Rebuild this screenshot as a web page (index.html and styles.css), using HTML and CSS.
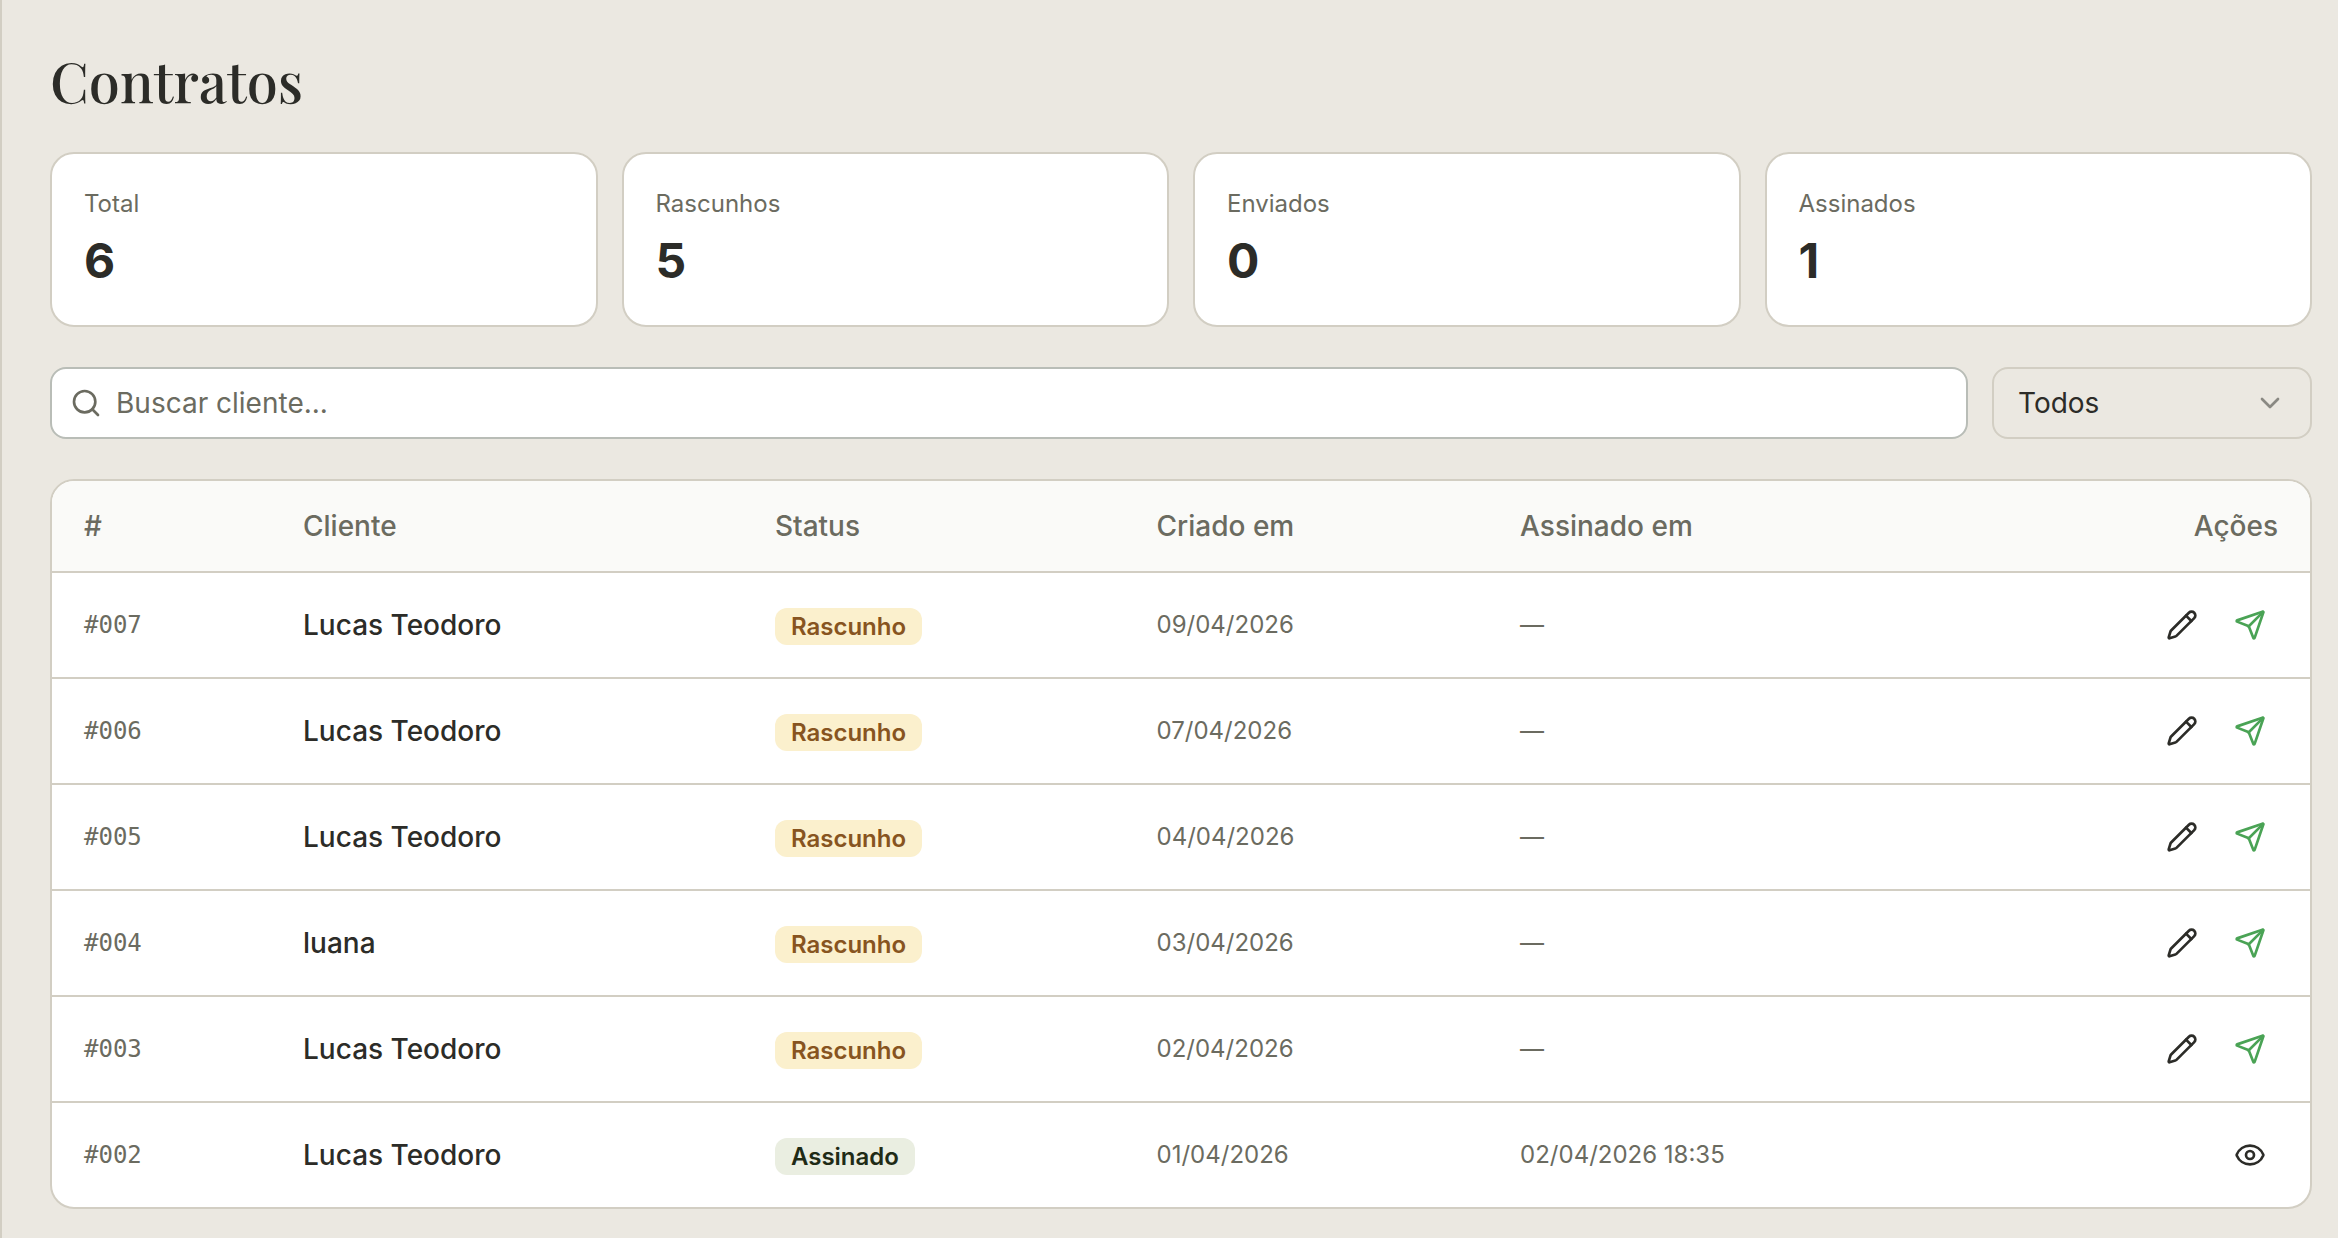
FILE: index.html
```html
<!doctype html>
<html lang="pt-BR">
<head>
  <meta charset="utf-8">
  <title>Contratos</title>
  <meta name="viewport" content="width=device-width, initial-scale=1">
  <link rel="stylesheet" href="styles.css">
</head>
<body>
  <!-- shared icons -->
  <svg class="sprite" aria-hidden="true">
    <symbol id="i-search" viewBox="0 0 24 24"><circle cx="11" cy="11" r="8"/><path d="m21 21-4.3-4.3"/></symbol>
    <symbol id="i-chevron" viewBox="0 0 24 24"><path d="m6 9 6 6 6-6"/></symbol>
    <symbol id="i-pencil" viewBox="0 0 24 24"><path d="M21.174 6.812a1 1 0 0 0-3.986-3.987L3.842 16.174a2 2 0 0 0-.5.83l-1.321 4.352a.5.5 0 0 0 .623.622l4.353-1.32a2 2 0 0 0 .83-.497z"/><path d="m15 5 4 4"/></symbol>
    <symbol id="i-send" viewBox="0 0 24 24"><path d="M14.536 21.686a.5.5 0 0 0 .937-.024l6.5-19a.496.496 0 0 0-.635-.635l-19 6.5a.5.5 0 0 0-.024.937l7.93 3.18a2 2 0 0 1 1.112 1.11z"/><path d="m21.854 2.147-10.94 10.939"/></symbol>
    <symbol id="i-eye" viewBox="0 0 24 24"><path d="M2.062 12.348a1 1 0 0 1 0-.696 10.75 10.75 0 0 1 19.876 0 1 1 0 0 1 0 .696 10.75 10.75 0 0 1-19.876 0"/><circle cx="12" cy="12" r="3"/></symbol>
  </svg>

  <main class="page">
    <h1>Contratos</h1>

    <section class="stats" aria-label="Resumo">
      <div class="card"><p class="card-label">Total</p><p class="card-value">6</p></div>
      <div class="card"><p class="card-label">Rascunhos</p><p class="card-value">5</p></div>
      <div class="card"><p class="card-label">Enviados</p><p class="card-value">0</p></div>
      <div class="card"><p class="card-label">Assinados</p><p class="card-value">1</p></div>
    </section>

    <form class="filters">
      <label class="search">
        <svg class="icon"><use href="#i-search"/></svg>
        <input type="text" placeholder="Buscar cliente..." aria-label="Buscar cliente">
      </label>
      <div class="select">
        <select aria-label="Status">
          <option>Todos</option>
          <option>Rascunho</option>
          <option>Enviado</option>
          <option>Assinado</option>
        </select>
        <svg class="icon"><use href="#i-chevron"/></svg>
      </div>
    </form>

    <div class="table-box">
      <table>
        <colgroup>
          <col class="c-num"><col class="c-client"><col class="c-status"><col class="c-created"><col>
          <col class="c-actions">
        </colgroup>
        <thead>
          <tr><th>#</th><th>Cliente</th><th>Status</th><th>Criado em</th><th>Assinado em</th><th class="right">Ações</th></tr>
        </thead>
        <tbody>
          <tr>
            <td class="num">#007</td><td class="client">Lucas Teodoro</td>
            <td><span class="badge draft">Rascunho</span></td>
            <td class="date">09/04/2026</td><td class="date">—</td>
            <td><div class="actions">
              <button type="button" aria-label="Editar"><svg class="icon"><use href="#i-pencil"/></svg></button>
              <button type="button" class="send" aria-label="Enviar"><svg class="icon"><use href="#i-send"/></svg></button>
            </div></td>
          </tr>
          <tr>
            <td class="num">#006</td><td class="client">Lucas Teodoro</td>
            <td><span class="badge draft">Rascunho</span></td>
            <td class="date">07/04/2026</td><td class="date">—</td>
            <td><div class="actions">
              <button type="button" aria-label="Editar"><svg class="icon"><use href="#i-pencil"/></svg></button>
              <button type="button" class="send" aria-label="Enviar"><svg class="icon"><use href="#i-send"/></svg></button>
            </div></td>
          </tr>
          <tr>
            <td class="num">#005</td><td class="client">Lucas Teodoro</td>
            <td><span class="badge draft">Rascunho</span></td>
            <td class="date">04/04/2026</td><td class="date">—</td>
            <td><div class="actions">
              <button type="button" aria-label="Editar"><svg class="icon"><use href="#i-pencil"/></svg></button>
              <button type="button" class="send" aria-label="Enviar"><svg class="icon"><use href="#i-send"/></svg></button>
            </div></td>
          </tr>
          <tr>
            <td class="num">#004</td><td class="client">luana</td>
            <td><span class="badge draft">Rascunho</span></td>
            <td class="date">03/04/2026</td><td class="date">—</td>
            <td><div class="actions">
              <button type="button" aria-label="Editar"><svg class="icon"><use href="#i-pencil"/></svg></button>
              <button type="button" class="send" aria-label="Enviar"><svg class="icon"><use href="#i-send"/></svg></button>
            </div></td>
          </tr>
          <tr>
            <td class="num">#003</td><td class="client">Lucas Teodoro</td>
            <td><span class="badge draft">Rascunho</span></td>
            <td class="date">02/04/2026</td><td class="date">—</td>
            <td><div class="actions">
              <button type="button" aria-label="Editar"><svg class="icon"><use href="#i-pencil"/></svg></button>
              <button type="button" class="send" aria-label="Enviar"><svg class="icon"><use href="#i-send"/></svg></button>
            </div></td>
          </tr>
          <tr>
            <td class="num">#002</td><td class="client">Lucas Teodoro</td>
            <td><span class="badge signed">Assinado</span></td>
            <td class="date">01/04/2026</td><td class="date">02/04/2026 18:35</td>
            <td><div class="actions">
              <button type="button" aria-label="Ver"><svg class="icon"><use href="#i-eye"/></svg></button>
            </div></td>
          </tr>
        </tbody>
      </table>
    </div>
  </main>
</body>
</html>
```

FILE: styles.css
```css
:root {
  --bg:#ebe8e1; --fg:#2c2c28; --muted:#6b6b60; --border:#d2cec3;
  --card:#fff; --head:#fafaf8; --input-border:#b9bdb7; --green:#4aa355;
}
*{box-sizing:border-box}
html,body{margin:0;padding:0;background:var(--bg);color:var(--fg)}
body{font-family:Inter,"Liberation Sans",sans-serif;font-size:28px;line-height:40px}
.sprite{display:none}
.icon{
  width:32px;height:32px;flex:none;display:block;
  fill:none;stroke:currentColor;stroke-width:2;stroke-linecap:round;stroke-linejoin:round
}

.page{min-height:100vh;border-left:2px solid var(--border);padding:48px 26px 28px 48px}
h1{
  margin:0 0 40px;font-family:"Playfair Display","Liberation Serif",serif;
  font-size:56px;line-height:64px;font-weight:500
}

/* summary cards */
.stats{display:grid;grid-template-columns:repeat(4,1fr);gap:24px;margin-bottom:40px}
.card{background:var(--card);border:2px solid var(--border);border-radius:24px;padding:32px}
.card p{margin:0}
.card-label{font-size:24px;line-height:35px;color:var(--muted)}
.card .card-value{font-size:48px;line-height:64px;font-weight:700;margin-top:8px}

/* filters */
.filters{display:flex;gap:24px;margin-bottom:40px}
.search,.select{height:72px;border-radius:16px}
.search{
  flex:1;display:flex;align-items:center;gap:14px;padding:0 18px;
  background:var(--card);border:2px solid var(--input-border);color:var(--muted)
}
.search input{flex:1;min-width:0;border:0;padding:0;outline:0;background:none;font:inherit;color:var(--fg)}
.search input::placeholder{color:var(--muted);opacity:1}
.select{position:relative;width:320px}
.select select{
  appearance:none;width:100%;height:100%;padding:0 24px;font:inherit;color:var(--fg);
  background:transparent;border:2px solid var(--border);border-radius:16px
}
.select .icon{position:absolute;right:26px;top:20px;opacity:.5;pointer-events:none}

/* table */
.table-box{background:var(--card);border:2px solid var(--border);border-radius:24px;overflow:hidden}
table{width:100%;table-layout:fixed;border-collapse:separate;border-spacing:0}
.c-num{width:9.7%}
.c-client{width:20.9%}
.c-status{width:16.9%}
.c-created{width:16.1%}
.c-actions{width:16%}
th,td{padding:0 32px;text-align:left;vertical-align:middle}
th{height:92px;background:var(--head);color:var(--muted);font-weight:500;border-bottom:2px solid var(--border)}
td{height:106px;border-bottom:2px solid var(--border)}
tbody tr:last-child td{height:104px;border-bottom:0}
.right{text-align:right}
.num{font-family:"DejaVu Sans Mono",monospace;font-size:24px;color:var(--muted)}
.client{font-weight:500}
.date{font-size:24px;color:var(--muted)}
.badge{display:inline-block;padding:2px 16px;border-radius:12px;font-size:24px;line-height:33px;font-weight:600}
.draft{background:#fbf0cd;color:#875420}
.signed{background:#eaeee1;color:#1f2b16}
.actions{display:flex;justify-content:flex-end;gap:12px}
.actions button{
  display:flex;align-items:center;justify-content:center;width:56px;height:56px;
  padding:0;border:0;border-radius:12px;background:none;color:var(--fg);cursor:pointer
}
.actions button:hover{background:var(--bg)}
.actions .send{color:var(--green)}
```
